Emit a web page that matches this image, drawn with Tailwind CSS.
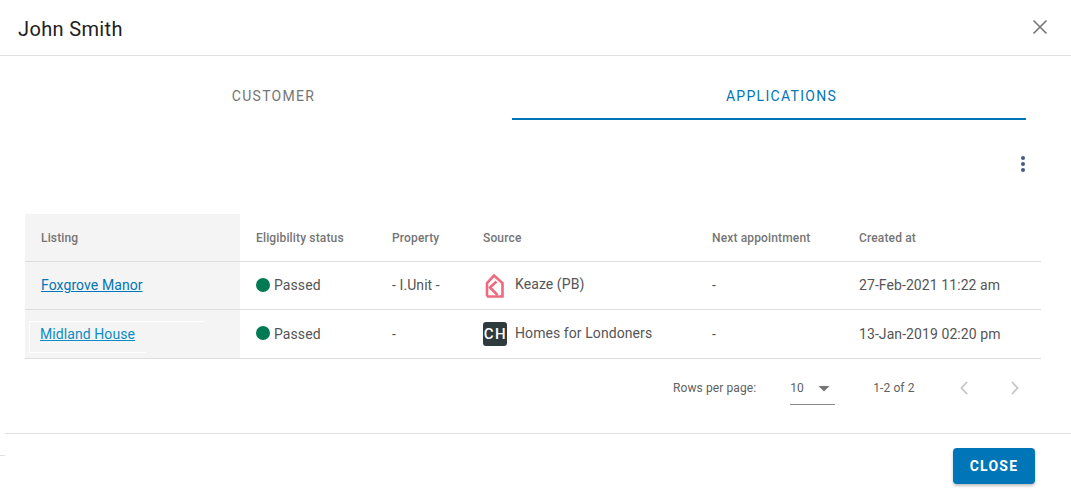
<!DOCTYPE html>
<html lang="en">
<head>
    <meta charset="UTF-8">
    <title>John Smith</title>
    <script src="https://cdn.jsdelivr.net/npm/@tailwindcss/browser@4"></script>
</head>
<body class="bg-white font-['Roboto',sans-serif] text-[#555555] overflow-hidden">
    <div class="w-[1071px] h-[497px] relative overflow-hidden">
        <!-- Header -->
        <header class="h-[56px] border-b border-[#e0e0e0] flex items-center justify-between pl-[18px] pr-[21px]">
            <h1 class="text-[20px] leading-[26px] text-[#212121] tracking-[0.35px] mt-[3px]">John Smith</h1>
            <button class="w-5 h-5 flex items-center justify-center mt-[-2px]">
                <svg width="20" height="20" viewBox="0 0 20 20" fill="none" stroke="#757575" stroke-width="1.6"><path d="M3.5 3.5 16.5 16.5M16.5 3.5 3.5 16.5"/></svg>
            </button>
        </header>

        <!-- Tabs -->
        <div class="flex pl-[35px] mt-[17px] h-[47px]">
            <div class="w-[477px] shrink-0 h-full flex items-center justify-center text-[14px] tracking-[1.3px] text-[#757575]">CUSTOMER</div>
            <div class="w-[514px] shrink-0 h-full flex items-center justify-center pl-[25px] pt-[2px] text-[14px] tracking-[1.3px] text-[#0075b7] border-b-2 border-[#0075b7]">APPLICATIONS</div>
        </div>

        <!-- Actions -->
        <div class="flex justify-end pr-[45px] mt-[35px] h-[18px]">
            <svg width="6" height="18" viewBox="0 0 6 18" fill="#4a5a85"><circle cx="3" cy="3" r="2"/><circle cx="3" cy="9" r="2"/><circle cx="3" cy="15" r="2"/></svg>
        </div>

        <!-- Table -->
        <div class="ml-[25px] w-[1016px] mt-[41px]">
            <div class="flex h-[48px] border-b border-[#dedede] text-[12px] font-medium text-[#757575] items-stretch tracking-[0.15px]">
                <div class="w-[215px] bg-[#f4f4f4] pl-[16px] flex items-center">Listing</div>
                <div class="w-[136px] pl-[16px] flex items-center">Eligibility status</div>
                <div class="w-[91px] pl-[16px] flex items-center">Property</div>
                <div class="w-[229px] pl-[16px] flex items-center">Source</div>
                <div class="w-[148px] pl-[16px] flex items-center">Next appointment</div>
                <div class="flex-1 pl-[15px] flex items-center">Created at</div>
            </div>
            <div class="flex h-[48px] border-b border-[#dedede] text-[14px] items-stretch tracking-[0.08px]">
                <div class="w-[215px] bg-[#f4f4f4] pl-[16px] flex items-center"><a class="text-[#0075b7] underline">Foxgrove Manor</a></div>
                <div class="w-[136px] pl-[16px] flex items-center gap-[4px]"><span class="w-[14px] h-[14px] rounded-full bg-[#007a53] mt-[-2px]"></span>Passed</div>
                <div class="w-[91px] pl-[16px] flex items-center">- I.Unit -</div>
                <div class="w-[229px] pl-[16px] flex items-center gap-[8px]">
                    <svg width="24" height="26" viewBox="0 0 24 26" fill="none" stroke="#f0697f" stroke-width="2.6" class="mt-[1px]"><path d="M4 23.5V10L11 2.5 19.5 10V23.5H4"/><path d="M13.5 8.5 7 14.5 14.5 22"/></svg>
                    <span class="mt-[-2px]">Keaze (PB)</span>
                </div>
                <div class="w-[148px] pl-[16px] flex items-center">-</div>
                <div class="flex-1 pl-[15px] flex items-center">27-Feb-2021 11:22 am</div>
            </div>
            <div class="flex h-[49px] border-b border-[#dedede] text-[14px] items-stretch tracking-[0.08px]">
                <div class="w-[215px] bg-[#f4f4f4] pl-[15px] flex items-center relative">
                    <a class="text-[#0d8cc4] underline">Midland House</a>
                    <!-- faint white outline around the link -->
                    <div class="absolute left-[4px] top-[11px] w-[175px] h-px bg-white"></div>
                    <div class="absolute left-[4px] top-[11px] w-px h-[31px] bg-white"></div>
                    <div class="absolute left-[4px] top-[42px] w-[117px] h-px bg-white"></div>
                </div>
                <div class="w-[136px] pl-[16px] flex items-center gap-[4px]"><span class="w-[14px] h-[14px] rounded-full bg-[#007a53] mt-[-2px]"></span>Passed</div>
                <div class="w-[91px] pl-[16px] flex items-center">-</div>
                <div class="w-[229px] pl-[16px] flex items-center gap-[8px]">
                    <span class="w-[24px] h-[24px] rounded-[3px] bg-[#2f3a3d] text-white text-[15px] font-medium tracking-[1.5px] pl-[1px] flex items-center justify-center">CH</span>
                    <span class="mt-[-2px]">Homes for Londoners</span>
                </div>
                <div class="w-[148px] pl-[16px] flex items-center">-</div>
                <div class="flex-1 pl-[15px] flex items-center">13-Jan-2019 02:20 pm</div>
            </div>
        </div>

        <!-- Pagination -->
        <div class="flex items-start h-[46px] text-[12px] text-[#616161] tracking-[0.1px]">
            <span class="ml-[673px] mt-[22px] leading-[14px]">Rows per page:</span>
            <div class="ml-[34px] mt-[15px] w-[45px] h-[31px] border-b border-[#8a8a8a] flex items-start justify-between">
                <span class="mt-[7px] leading-[14px]">10</span>
                <svg width="12" height="6" viewBox="0 0 12 6" fill="#757575" class="mt-[12px] mr-[5px]"><path d="M0.5 0H11.5L6 5.5Z"/></svg>
            </div>
            <span class="ml-[38px] mt-[22px] leading-[14px]">1-2 of 2</span>
            <svg width="10" height="14" viewBox="0 0 10 14" fill="none" stroke="#c4c4c4" stroke-width="1.8" class="ml-[44px] mt-[22px]"><path d="M8 1 2.5 7 8 13"/></svg>
            <svg width="10" height="14" viewBox="0 0 10 14" fill="none" stroke="#c4c4c4" stroke-width="1.8" class="ml-[41px] mt-[22px]"><path d="M2 1 7.5 7 2 13"/></svg>
        </div>

        <!-- Footer -->
        <footer class="ml-[5px] mt-[28px] border-t border-[#e0e0e0] h-[64px] flex justify-end pr-[36px] pt-[14px]">
            <button class="w-[82px] h-[36px] rounded-[4px] bg-[#0075b7] text-white text-[14px] font-bold tracking-[1.25px] shadow-[0_2px_3px_rgba(0,0,0,0.25)]">CLOSE</button>
        </footer>
        <div class="absolute left-0 top-[455px] w-[5px] h-px bg-[#e0e0e0]"></div>
    </div>
</body>
</html>
